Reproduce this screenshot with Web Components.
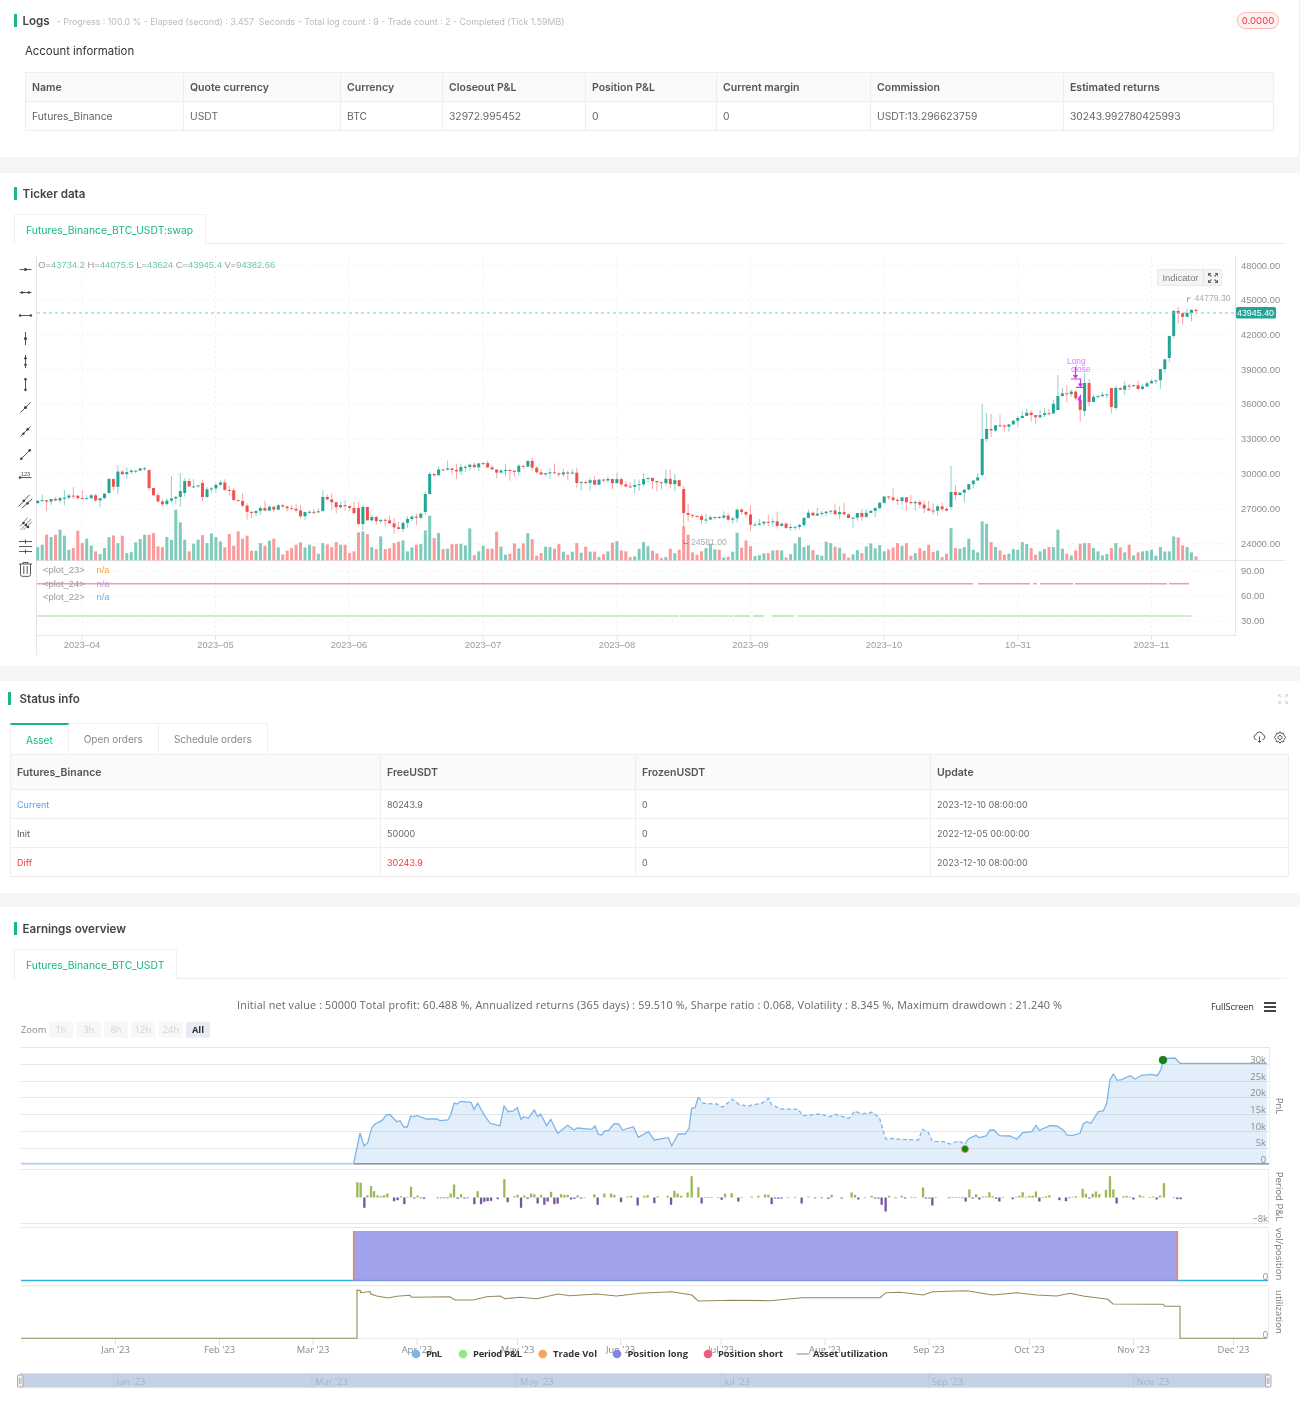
<!doctype html>
<html>
<head>
<meta charset="UTF-8" />
<title>Backtest result</title>
<style>
  body { margin: 0; background: #f4f5f7; font-family: Inter, "Liberation Sans", sans-serif; }
  app-panel { filter: blur(.35px); }
</style>
</head>
<body>

<template id="panel-tpl">
  <style>
    :host { display: block; background: #fff; color: #333; }
    header { display: flex; align-items: center; height: 13px; padding-top: var(--top, 14px); padding-left: var(--left, 13.5px); padding-right: 13px; }
    .bar { width: 3px; height: 13px; background: #1db58b; margin-right: var(--gap, 6px); flex: none; }
    h2 { margin: 2px 0 0; font-size: 11.6px; font-weight: 600; color: #444; white-space: nowrap; line-height: 13px; }
    .meta { flex: 1; min-width: 0; }
  </style>
  <header><span class="bar"></span><h2></h2><div class="meta"><slot name="meta"></slot></div><slot name="aside"></slot></header>
  <slot></slot>
</template>

<template id="table-tpl">
  <style>
    :host { display: block; }
    table { border-collapse: collapse; table-layout: fixed; width: 100%; font-size: var(--cell, 10.3px); color: #666; }
    th, td { border: 1px solid #eeeeee; padding: 0 6px; text-align: left; height: 28px; box-sizing: content-box; white-space: nowrap; overflow: hidden; }
    th { background: #fafafa; font-size: 10.5px; font-weight: 600; color: #555; }
    .blue { color: #5d9cec; }
    .red { color: #f5393f; }
    .dark { color: #555; }
  </style>
  <table><colgroup></colgroup><thead></thead><tbody></tbody></table>
</template>

<template id="tabs-tpl">
  <style>
    :host { display: flex; height: 30px; box-sizing: border-box; border-bottom: 1px solid #eee; font-size: 10.36px; }
    span { display: flex; align-items: center; box-sizing: border-box; height: 30px; padding: 0 11.5px; background: #fff; border: 1px solid #f0f0f0; border-bottom: 0; border-radius: 2px 2px 0 0; color: #18b787; }
  </style>
</template>

<template id="cards-tpl">
  <style>
    :host { display: flex; font-size: 10.05px; }
    span { display: flex; align-items: center; box-sizing: border-box; height: 31px; padding: 0 15px; border: 1px solid #f0f0f0; border-left: 0; border-bottom: 0; color: #888; }
    span.on { color: #18b787; border-top: 2px solid #1db58b; border-left: 1px solid #f0f0f0; }
  </style>
</template>

<app-panel heading="Logs" style="--top:14px;--gap:6px;margin-bottom:16px;box-shadow:inset -1px 0 #eee">
  <log-meta slot="meta" text="- Progress : 100.0 % - Elapsed (second) : 3.457  Seconds - Total log count : 9 - Trade count : 2 - Completed (Tick 1.59MB)"></log-meta>
  <pnl-badge slot="aside" value="0.0000"></pnl-badge>
  <account-block></account-block>
</app-panel>

<app-panel heading="Ticker data" style="margin-bottom:15px">
  <tab-strip style="margin:14px 15px 0 13.5px" tabs="Futures_Binance_BTC_USDT:swap"></tab-strip>
  <kline-chart></kline-chart>
</app-panel>

<app-panel heading="Status info" style="--top:11px;--left:7.5px;--gap:9px;margin-bottom:14px">
  <expand-icon slot="aside" style="--c:#dcdcdc;margin-right:-1px"></expand-icon>
  <status-block></status-block>
</app-panel>

<app-panel heading="Earnings overview" style="--top:15px;--left:13.5px">
  <tab-strip style="margin:14px 14.5px 0 13.5px" tabs="Futures_Binance_BTC_USDT"></tab-strip>
  <earnings-chart></earnings-chart>
</app-panel>

<script>
'use strict'

function shadow(el, tplId) {
  const root = el.attachShadow({ mode: 'open' });
  if (tplId) root.appendChild(document.getElementById(tplId).content.cloneNode(true));
  return root;
}
function esc(s) { return String(s).replace(/&/g, '&amp;').replace(/</g, '&lt;').replace(/>/g, '&gt;'); }
function txt(x, y, s, attrs) { return `<text x="${x}" y="${y}" ${attrs || ''}>${esc(s)}</text>`; }
function seeded(a) {
  return () => { a |= 0; a = a + 0x6D2B79F5 | 0; let t = Math.imul(a ^ a >>> 15, 1 | a); t = t + Math.imul(t ^ t >>> 7, 61 | t) ^ t; return ((t ^ t >>> 14) >>> 0) / 4294967296; };
}
function line(x1, y1, x2, y2, c, extra) { return `<line x1="${x1}" y1="${y1}" x2="${x2}" y2="${y2}" stroke="${c}" ${extra || ''}/>`; }
function pts(a) { return a.map(p => p[0] + ',' + p[1]).join(' '); }

customElements.define('app-panel', class extends HTMLElement {
  constructor() {
    super();
    const root = shadow(this, 'panel-tpl');
    root.querySelector('h2').textContent = this.getAttribute('heading');
  }
});

customElements.define('log-meta', class extends HTMLElement {
  constructor() {
    super();
    const root = this.attachShadow({ mode: 'open' });
    root.innerHTML = `<style>:host{display:block;white-space:pre;font-size:8.8px;color:#bbb;padding-left:7px;padding-top:1px;line-height:13px}</style>${esc(this.getAttribute('text'))}`;
  }
});

customElements.define('pnl-badge', class extends HTMLElement {
  constructor() {
    super();
    const root = this.attachShadow({ mode: 'open' });
    root.innerHTML = `<style>:host{display:flex;align-items:center;justify-content:center;width:42px;height:17px;box-sizing:border-box;margin-right:8px;background:#fff1f0;border:1px solid #ffb9b9;border-radius:8px;font-size:9.6px;color:#f5303c}</style>${esc(this.getAttribute('value'))}`;
  }
});

customElements.define('expand-icon', class extends HTMLElement {
  constructor() {
    super();
    const root = this.attachShadow({ mode: 'open' });
    root.innerHTML = `<style>:host{display:block;width:10px;height:10px;line-height:0}</style>
      <svg width="10" height="10" viewBox="0 0 10 10" fill="none" stroke="var(--c,#777)" stroke-width="1.1">
        <path d="M.5 .5L3.5 3.5M.5 3V.5H3M9.5 .5L6.5 3.5M7 .5H9.5V3M.5 9.5L3.5 6.5M.5 7V9.5H3M9.5 9.5L6.5 6.5M7 9.5H9.5V7"/></svg>`;
  }
});

customElements.define('data-table', class extends HTMLElement {
  constructor() {
    super();
    const root = shadow(this, 'table-tpl');
    const h = this.getAttribute('row-height');
    const hh = this.getAttribute('head-height');
    const style = document.createElement('style');
    style.textContent = `td{height:${h}px} th{height:${hh}px}`;
    root.appendChild(style);
    root.querySelector('colgroup').innerHTML = this.getAttribute('widths').split(',').map(w => `<col style="width:${w}px">`).join('');
    root.querySelector('thead').innerHTML = '<tr>' + this.getAttribute('head').split('|').map(c => `<th>${esc(c)}</th>`).join('') + '</tr>';
    root.querySelector('tbody').innerHTML = this.getAttribute('rows').split(';').map(r => '<tr>' + r.split('|').map(c => {
      const m = c.match(/^(blue|red|dark):(.*)$/);
      return m ? `<td class="${m[1]}">${esc(m[2])}</td>` : `<td>${esc(c)}</td>`;
    }).join('') + '</tr>').join('');
  }
});

customElements.define('tab-strip', class extends HTMLElement {
  constructor() {
    super();
    const root = shadow(this, 'tabs-tpl');
    this.getAttribute('tabs').split('|').forEach(t => {
      const s = document.createElement('span');
      s.textContent = t;
      root.appendChild(s);
    });
  }
});

customElements.define('card-tabs', class extends HTMLElement {
  constructor() {
    super();
    const root = shadow(this, 'cards-tpl');
    this.getAttribute('tabs').split('|').forEach((t, i) => {
      const s = document.createElement('span');
      s.textContent = t;
      if (i === 0) s.className = 'on';
      root.appendChild(s);
    });
  }
});

customElements.define('account-block', class extends HTMLElement {
  constructor() {
    super();
    const root = this.attachShadow({ mode: 'open' });
    root.innerHTML = `<style>
      :host{display:block;padding:17px 27px 26px 25px}
      h3{margin:0 0 14px;font-size:11.4px;line-height:14px;font-weight:400;color:#333}
    </style>
    <h3>Account information</h3>
    <data-table widths="158,157,102,143,131,154,193,210" head-height="28" row-height="28"
      head="Name|Quote currency|Currency|Closeout P&amp;L|Position P&amp;L|Current margin|Commission|Estimated returns"
      rows="Futures_Binance|USDT|BTC|32972.995452|0|0|USDT:13.296623759|30243.992780425993"></data-table>`;
  }
});

customElements.define('status-block', class extends HTMLElement {
  constructor() {
    super();
    const root = this.attachShadow({ mode: 'open' });
    root.innerHTML = `<style>
      :host{display:block;padding:18px 12px 16px 10px;--cell:9px}
      .top{display:flex;justify-content:space-between;align-items:center}
      .ic{display:flex;gap:8px;align-items:center;margin-right:2px;margin-top:-3px}
    </style>
    <div class="top">
      <card-tabs tabs="Asset|Open orders|Schedule orders"></card-tabs>
      <div class="ic">
        <svg width="13" height="12" viewBox="0 0 13 12" fill="none" stroke="#555" stroke-width="1"><path d="M3.5 8.5H3A2.5 2.5 0 0 1 3 3.6 3.6 3.6 0 0 1 10 3.8 2.4 2.4 0 0 1 10 8.5H9.500"/><path d="M6.500 5.500V11.500M4.800 9.800L6.500 11.500 8.200 9.800"/></svg>
        <svg width="12" height="13" viewBox="0 0 12 13" fill="none" stroke="#555" stroke-width="1"><path d="M6 .7L7.200 2.500 9.300 2.100 10 4.200 11.500 6.500 10 8.800 9.300 10.900 7.200 10.500 6 12.300 4.800 10.500 2.700 10.900 2 8.800 .5 6.500 2 4.200 2.700 2.100 4.800 2.500Z"/><circle cx="6" cy="6.500" r="2"/></svg>
      </div>
    </div>
    <data-table widths="370,255,295,358" head-height="34" row-height="28"
      head="Futures_Binance|FreeUSDT|FrozenUSDT|Update"
      rows="blue:Current|80243.9|0|2023-12-10 08:00:00;dark:Init|50000|0|2022-12-05 00:00:00;red:Diff|red:30243.9|0|2023-12-10 08:00:00"></data-table>`;
  }
});

// one drawing tool per row, centre of each icon is 11.5,11.5
const TOOL_ICONS = (() => {
  const dot = (x, y) => `<circle cx="${x}" cy="${y}" r="1.3" fill="#444" stroke="none"/>`;
  const seg = (x1, y1, x2, y2) => `<path d="M${x1} ${y1}L${x2} ${y2}"/>`;
  const rows = [];
  [[-.1, .1], [-3.3, 3.3], [-5.3, 5.3]].forEach(d => rows.push(seg(5.500, 11.500, 17.500, 11.500) + d.map(v => dot(11.500 + v, 11.500)).join('')));
  [[-.1, .1], [-3.3, 3.3], [-5.3, 5.3]].forEach(d => rows.push(seg(11.500, 5, 11.500, 18) + d.map(v => dot(11.500, 11.500 + v)).join('')));
  [[-.1, .1], [-2.2, 2.2], [-4.2, 4.2]].forEach(d => rows.push(seg(6.500, 16.500, 16.500, 6.500) + d.map(v => dot(11.500 + v, 11.500 - v)).join('')));
  rows.push(`<text x="7" y="9.500" font-size="5.500" fill="#444" stroke="none" font-family="Liberation Sans">123</text>` + seg(5.500, 11.500, 17.500, 11.500) + dot(6, 11.500));
  rows.push(seg(4.500, 17.500, 15.500, 5.800) + seg(8.200, 18.800, 18.200, 9.800) + dot(9.800, 11.800) + dot(13.500, 14.300));
  rows.push(`<g stroke="#777">` + seg(6, 14.500, 13.500, 5.500) + seg(6.500, 18, 17, 7) + seg(9.500, 18, 18, 9.500) + `</g>` + dot(9.500, 11) + dot(12, 13) + dot(14, 15));
  rows.push(seg(5, 6.500, 18, 6.500) + seg(5, 11.500, 18, 11.500) + seg(5, 16.500, 18, 16.500) + seg(11.500, 4.500, 11.500, 8.500) + seg(11.500, 14.500, 11.500, 18.500));
  rows.push(`<path d="M5 6H18M9 6V4.500H14V6M6.500 6V16.500A1.800 1.800 0 0 0 8.300 18.300H14.700A1.800 1.800 0 0 0 16.500 16.500V6M9.800 8V16M13.200 8V16"/>`);
  return rows;
})();

customElements.define('tool-rail', class extends HTMLElement {
  constructor() {
    super();
    const root = this.attachShadow({ mode: 'open' });
    root.innerHTML = `<style>:host{display:flex;flex-direction:column;width:23px}svg{display:block;flex:none}</style>` +
      TOOL_ICONS.map(i => `<svg width="23" height="23.08" viewBox="0 0 23 23" fill="none" stroke="#444" stroke-width=".9">${i}</svg>`).join('');
  }
});

customElements.define('indicator-button', class extends HTMLElement {
  constructor() {
    super();
    const root = this.attachShadow({ mode: 'open' });
    root.innerHTML = `<style>
      :host{display:flex;align-items:stretch;box-sizing:border-box;width:65px;height:17px;background:#f3f4f6;border:1px solid #e8e8e8;border-radius:2px;font:9.4px "Liberation Sans",sans-serif;color:#7b7b7b}
      span{flex:1;display:flex;align-items:center;justify-content:center;border-right:1px solid #e3e3e3}
      div{width:17px;display:flex;align-items:center;justify-content:center}
    </style><span>Indicator</span><div><expand-icon style="--c:#666"></expand-icon></div>`;
  }
});

// pixel positions read off the picture, x then y of the candle close
const CLOSE_PATH = [[38,503],[55,498],[72,493],[82,498],[100,498],[108,487],[113,488],[117,474],[132,470],[145,468],[148,483],[157,502],[170,502],[183,487],[200,483],[205,493],[220,483],[233,497],[250,512],[267,508],[287,508],[303,515],[320,512],[323,500],[337,505],[347,508],[360,517],[380,520],[400,527],[407,517],[421,515],[425,503],[429,483],[438,472],[443,467],[460,470],[482,463],[497,473],[513,472],[528,463],[533,470],[553,475],[573,475],[577,482],[600,482],[617,481],[633,486],[643,480],[673,482],[679,484],[683,513],[688,517],[707,520],[713,517],[733,518],[737,510],[745,513],[750,522],[773,523],[795,527],[803,520],[808,515],[827,512],[853,517],[868,513],[885,497],[907,500],[928,508],[947,508],[951,498],[963,492],[968,483],[978,475],[982,439],[987,433],[997,425],[1013,423],[1027,415],[1047,415],[1057,398],[1063,392],[1075,395],[1080,407],[1084,393],[1088,393],[1093,399],[1102,393],[1111,398],[1116,397],[1125,387],[1142,388],[1156,380],[1161,370],[1165,358],[1169,336],[1173,311],[1178,313],[1183,317],[1187,315],[1192,312],[1196,313]];
// tops of the volume bars in the zoomed crops
const VOL_A = [892,885,855,862,855,840,858,900,895,843,880,867,888,905,913,895,862,857,880,858,910,907,878,868,855,855,850,890,892,862,870,780,818,870,905,882,870,856,880,851,862,875,893,853,888,845,867,858,903,903,880,888,873,867,893,914,903,895,885,878,893,885,890,912,880,884,892,877,885,885,910,905,848,845,853,892,898,860,898,896,880,876,872,905,893,885];
const VOL_B = [433,392,348,415,400,448,447,433,433,432,437,386,466,455,438,447,447,396,441,465,462,431,446,431,400,418,468,460,441,442,447,433,456,465,456,430,459,441,456,456,472,463,455,429,424,452,455,472,470,447,427,439,453,461,475,472,447,460,450,380,405,458,465,455,445,432,449,450,473,471,456,399,444,422,439,469,466,461,460,452,451,452,473,463,431,412,442,437,451,465,468,426,430,441,444,461,474,464,451,460,440,431];
const VOL_C = [888,880,918,910,895,903,885,907,903,922,912,835,895,897,892,867,900,908,815,822,877,892,902,915,912,898,900,877,883,895,915,905,898,892,892,840,897,912,917,902,882,880,880,895,905,917,913,895,880,893,908,885,917,908,905,903,900,918,892,905,905,860,863,887,892,908,920];
// wick top and bottom where the spread stands out
const WICK_OVERRIDE = { 32: [473, 507], 205: [466, 510], 212: [404, 476], 213: [413, 442], 214: [414, 437], 229: [375, 410], 234: [397, 422], 145: [486, 527], 30: [476, 503] };
// body top, bottom and direction of the tall candles
const BODY_OVERRIDE = { 16: [479, 493, 1], 25: [470, 488, 0], 33: [481, 493, 1], 37: [483, 497, 0], 64: [497, 511, 1], 72: [508, 524, 0], 73: [507, 524, 1], 87: [494, 512, 1], 88: [474, 494, 1], 145: [489, 513, 0], 205: [492, 507, 1], 212: [439, 475, 1], 213: [429, 439, 1], 229: [396, 410, 1], 234: [400, 410, 0], 235: [383, 411, 1], 236: [383, 402, 0], 241: [388, 407, 0], 242: [388, 408, 1], 254: [336, 358, 1], 255: [311, 336, 1] };

customElements.define('kline-chart', class extends HTMLElement {
  constructor() {
    super();
    const root = this.attachShadow({ mode: 'open' });
    const rnd = seeded(23);
    const closeAt = x => {
      for (let i = 1; i < CLOSE_PATH.length; i++) {
        const a = CLOSE_PATH[i - 1], b = CLOSE_PATH[i];
        if (x <= b[0]) return a[1] + (b[1] - a[1]) * (x - a[0]) / (b[0] - a[0]);
      }
      return 313;
    };
    const GREEN = '#22a594', RED = '#f0504f';
    let s = '';
    // grid
    const priceY = [265.3, 300, 334.7, 369.3, 404, 439, 474, 509, 543.7];
    const prices = ['48000.00', '45000.00', '42000.00', '39000.00', '36000.00', '33000.00', '30000.00', '27000.00', '24000.00'];
    const lowY = [571, 596, 621], lows = ['90.00', '60.00', '30.00'];
    const months = [[82, '2023–04'], [215.5, '2023–05'], [349, '2023–06'], [483, '2023–07'], [617, '2023–08'], [750.5, '2023–09'], [884, '2023–10'], [1018, '10–31'], [1151.500, '2023–11']];
    const dots = 'stroke-width="1" stroke-dasharray="2 3"';
    priceY.concat(lowY).forEach(y => { s += line(37, y, 1235, y, '#f0f0f0', dots); });
    months.forEach(m => { s += line(m[0], 256, m[0], 636, '#f0f0f0', dots); });
    // axes
    s += line(36.5, 256, 36.5, 655, '#e6e6e6');
    s += line(1235.5, 256, 1235.5, 636, '#e6e6e6');
    s += line(37, 635.5, 1235, 635.5, '#e6e6e6');
    s += line(37, 560.5, 1285, 560.5, '#e6e6e6');
    months.forEach(m => { s += line(m[0], 636, m[0], 640, '#e6e6e6'); });
    // candles and volume
    let prev = 503, body = '', vols = '';
    const volH = [];
    VOL_A.forEach((v, i) => { volH[i] = (932 - v) / 3; });
    VOL_B.forEach((v, i) => { volH[86 + i] = (482 - v) / 3; });
    VOL_C.forEach((v, i) => { volH[194 + i] = (932 - v) / 3; });
    for (let i = 0; i < 261; i++) {
      const x = 37.7 + i * 4.455;
      let c = closeAt(x) + (rnd() - .5) * 5.5;
      let top = Math.min(prev, c), bot = Math.max(prev, c);
      if (bot - top < 1) bot = top + 1;
      let up = c < prev;
      const b = BODY_OVERRIDE[i];
      if (b) { top = b[0]; bot = b[1]; up = !!b[2]; c = up ? top : bot; }
      const col = up ? GREEN : RED;
      let hi = top - rnd() * rnd() * 11, lo = bot + rnd() * rnd() * 11;
      if (WICK_OVERRIDE[i]) { hi = WICK_OVERRIDE[i][0]; lo = WICK_OVERRIDE[i][1]; }
      body += line(x.toFixed(1), hi.toFixed(1), x.toFixed(1), lo.toFixed(1), col, 'stroke-width="1" opacity=".5"');
      body += `<rect x="${(x - 1.5).toFixed(1)}" y="${top.toFixed(1)}" width="3" height="${(bot - top).toFixed(1)}" fill="${col}"/>`;
      const h = volH[i] === undefined ? 6 + rnd() * 12 : volH[i];
      vols += `<rect x="${(x - 1.5).toFixed(1)}" y="${(560.400 - h).toFixed(1)}" width="3" height="${h.toFixed(1)}" fill="${up ? '#7ecbbb' : '#fb9a9a'}"/>`;
      prev = c;
    }
    s += vols + body;
    // last price line
    s += line(37, 313, 1236, 313, '#6fd3c6', 'stroke-width="1.200" stroke-dasharray="3 3"');
    // indicator lines
    const redSegs = [[37, 973], [978, 1030], [1033, 1037], [1040, 1073], [1075, 1167], [1169, 1189]];
    redSegs.forEach(g => { s += line(g[0], 583.7, g[1], 583.7, '#f89a9a', 'stroke-width="1.500"'); });
    const greenSegs = [[37, 679], [680, 733], [734, 750], [753, 764], [772, 794], [797, 1191.500]];
    greenSegs.forEach(g => { s += line(g[0], 616, g[1], 616, '#9ddb97', 'stroke-width="1.200"'); });
    // axis labels
    const axis = 'font-size="9.4" fill="#8d8d8d"';
    prices.forEach((p, i) => { s += txt(1241, priceY[i] + 3.300, p, axis); });
    lows.forEach((p, i) => { s += txt(1241, lowY[i] + 3.300, p, axis); });
    months.forEach(m => { s += txt(m[0], 648, m[1], 'text-anchor="middle" font-size="9.4" fill="#9a9aa2"'); });
    // legend text
    const lg = 'font-size="9.4" fill="#9a9aa2"';
    s += txt(43, 573.3, '<plot_23>', lg) + txt(96.5, 573.3, 'n/a', 'font-size="9.4" fill="#f7a93f"');
    s += txt(43, 586.8, '<plot_24>', lg) + txt(96.5, 586.8, 'n/a', 'font-size="9.4" fill="#c39be0"');
    s += txt(43, 600.3, '<plot_22>', lg) + txt(96.5, 600.3, 'n/a', 'font-size="9.4" fill="#6cb2ee"');
    // OHLC head
    const tGrey = 'fill="#9a9a9a"', tVal = 'fill="#6ec5b4"';
    s += `<text x="38.300" y="267.800" font-size="9.4">` +
      `<tspan ${tGrey}>O=</tspan><tspan ${tVal}>43734.2</tspan><tspan ${tGrey}> H=</tspan><tspan ${tVal}>44075.5</tspan>` +
      `<tspan ${tGrey}> L=</tspan><tspan ${tVal}>43624</tspan><tspan ${tGrey}> C=</tspan><tspan ${tVal}>43945.4</tspan>` +
      `<tspan ${tGrey}> V=</tspan><tspan ${tVal}>94382.66</tspan></text>`;
    // price tag and extremes
    s += `<rect x="1236" y="307" width="40" height="11.500" rx="1.500" fill="#22a594"/>`;
    s += txt(1237, 316, '43945.40', 'font-size="8.900" fill="#fff"');
    s += txt(1194.600, 301, '44779.30', 'font-size="8.600" fill="#a9adb5"');
    s += `<path d="M1190.500 298H1187.500V302" fill="none" stroke="#8d8d8d" stroke-width=".9"/>`;
    s += txt(691, 545, '24581.00', 'font-size="8.600" fill="#a9adb5"');
    s += `<path d="M683.500 540V543.500H688" fill="none" stroke="#8d8d8d" stroke-width=".9"/>`;
    // trade marks
    const P = '#c43cf2';
    s += txt(1067, 363.500, 'Long', 'font-size="8.400" fill="#dc78ff"') + txt(1071, 372, 'close', 'font-size="8.400" fill="#dc78ff"');
    s += `<g fill="none" stroke="${P}" stroke-width="1.200">` +
      `<path d="M1075.500 367V376M1071 379H1080.500V385M1076 387.300H1084"/></g>` +
      `<path d="M1072.800 375H1078.200L1075.500 379ZM1077.800 383.500H1083.200L1080.500 387.500ZM1077.500 399L1081 394V404Z" fill="${P}"/>`;
    root.innerHTML = `<style>
      :host{display:block;position:relative;height:422px}
      svg{display:block;font-family:"Liberation Sans",sans-serif}
      tool-rail{position:absolute;left:14px;top:14px}
      indicator-button{position:absolute;left:1157px;top:25px}
    </style>
    <svg width="1300" height="422" viewBox="0 244 1300 422" shape-rendering="geometricPrecision">${s}</svg>
    <tool-rail></tool-rail>
    <indicator-button></indicator-button>`;
  }
});

// PnL curve, read off the picture. The dashed stretch runs from x=698 to x=965
const PNL = [[353.7,1163.3],[360,1133],[364,1146],[367.7,1142.7],[371.7,1128],[375,1124],[381.7,1120.7],[386.7,1114.7],[390,1114.7],[396.7,1121.7],[400,1120.7],[404,1127],[407.3,1127],[410.7,1116],[413,1116.7],[417.3,1115.7],[426.7,1119],[436.7,1119],[440,1120.7],[447.7,1120],[450.7,1115],[454,1103.3],[456.7,1104],[461,1101.3],[471,1102.3],[474,1109.3],[477.7,1103.3],[483.3,1113.3],[490,1123.3],[500,1126],[504,1106],[508.3,1111.7],[513.3,1111],[517.3,1107.7],[521,1119.3],[524,1116.7],[528.3,1118.3],[534.3,1110],[537.7,1116.7],[540.7,1114],[546.7,1125.7],[550.7,1119.3],[557.7,1133.3],[567.7,1125.3],[574,1130],[577.3,1128],[591.7,1129.3],[595,1126],[598.3,1134.3],[601.7,1135],[605,1130.7],[608.3,1130.7],[614,1124],[618.3,1123.7],[622.7,1130],[633.3,1126.7],[638.3,1137.3],[648.3,1131.7],[654.3,1140],[668.3,1137.7],[671.7,1145.7],[678.3,1134],[685,1134],[689,1128.3],[691.7,1108.3],[695,1107.7],[698.3,1097.3]];
const PNL_DASH = [[698.3,1097.3],[703.3,1103.3],[716.7,1104],[722.3,1107.3],[732.3,1099.3],[740,1105],[748.3,1106],[761.7,1103.3],[768.7,1098.3],[771.7,1105],[781.7,1109],[798.3,1109.3],[802.7,1115.7],[820,1114],[830,1116.7],[835,1114.3],[849,1118.3],[855,1111],[861.700,1114],[871.700,1112.3],[879.300,1117.3],[885.700,1139],[891.700,1138.3],[900,1139.3],[918.300,1140],[922.700,1129.3],[928.300,1132.3],[932.300,1141.3],[943.300,1141.700],[950,1144],[958.300,1141],[965,1144]];
const PNL_END = [[965,1144],[968.3,1139],[976,1135.3],[979.3,1137.7],[986,1136],[990,1130],[994,1130],[999.3,1135.7],[1010,1136],[1016.7,1139.3],[1022.7,1132.7],[1031.7,1131.7],[1036,1125.3],[1039.3,1130.3],[1050,1125.7],[1056.7,1126],[1063.3,1130],[1066.7,1135],[1071.7,1135.7],[1080,1133.3],[1083.3,1124],[1086.7,1121.7],[1091,1123.3],[1098.3,1111.7],[1103.3,1111],[1106.7,1103.3],[1110,1080],[1113.3,1074],[1117.3,1080.3],[1121.7,1079.7],[1130,1075.7],[1135,1079],[1141.7,1075.3],[1151.7,1074.3],[1157.3,1075.7],[1160.7,1070],[1163.3,1060],[1168,1058.5],[1175,1058],[1180,1063.3],[1266.7,1063.3]];
// period P&L bars per crop: origin x, [x, height] in 3x pixels, up is positive
const BARS = [[0, [[1072,46],[1082,44],[1093,-31],[1102,7],[1113,34],[1122,19],[1133,7],[1143,4],[1152,7],[1162,12],[1182,-11],[1193,-8],[1203,4],[1213,-20],[1222,2],[1233,32],[1243,-3],[1253,6],[1263,-2],[1272,-4],[1313,-2],[1323,-2],[1333,-2],[1343,-2],[1352,12],[1362,39],[1373,-4],[1383,10],[1393,-3],[1403,-2],[1423,-20],[1433,19],[1443,-20],[1453,-13],[1463,-11],[1473,-10],[1493,-5]]],
  [500, [[13,55],[23,-14],[43,4],[53,8],[63,-31],[73,6],[83,-4],[93,12],[103,10],[113,-18],[123,8],[133,-22],[143,-12],[153,17],[163,-20],[173,-18],[183,10],[193,8],[203,8],[213,-6],[223,-4],[233,7],[243,-3],[253,1],[283,10],[293,-22],[313,12],[333,12],[343,8],[363,-14],[383,3],[393,5],[413,-24],[433,5],[443,7],[463,-17],[473,4],[503,5],[513,-22],[523,20],[533,12],[543,5],[563,15],[575,64],[595,31],[605,-18],[615,2],[625,1],[635,1],[655,1],[665,-7],[675,12],[695,13],[715,-12],[725,1],[755,3],[775,5],[795,9],[805,8],[815,-20],[825,-3],[835,-4],[845,-3],[865,1],[885,1],[905,-18],[925,3],[945,-2],[965,-2],[985,-4],[995,8],[1025,-3],[1055,15],[1065,8],[1075,-6],[1095,1],[1115,5],[1125,-3],[1135,-3],[1145,-22],[1157,-42],[1167,5],[1187,-2]]],
  [900, [[5,5],[15,-3],[35,2],[45,1],[69,30],[78,-3],[88,-3],[97,-24],[107,1],[147,-2],[157,2],[167,1],[177,1],[187,-1],[197,-12],[208,24],[218,-3],[228,10],[238,-6],[248,3],[258,3],[268,16],[278,4],[288,-4],[298,-12],[308,1],[338,-5],[348,2],[358,5],[368,16],[378,2],[388,5],[398,5],[408,18],[418,-12],[428,1],[438,4],[448,7],[478,-8],[498,-11],[508,-2],[518,2],[528,4],[548,26],[558,11],[568,-3],[578,11],[588,18],[598,10],[618,23],[630,64],[640,24],[650,-18],[670,4],[680,5],[690,1],[700,-6],[720,7],[730,3],[750,1],[760,3],[770,-6],[780,6],[792,43],[822,1],[832,-5],[842,-5]]]];
const UTIL = [[21,1338.3],[357,1338.3],[357,1290],[360.700,1290.700],[360.700,1292.700],[370,1291.500],[370.700,1294],[376.700,1296],[388.300,1298],[396.700,1296.300],[410,1295.300],[411.700,1297.300],[450,1296.700],[455,1300],[473.300,1300],[486.700,1296.700],[500,1296],[505,1298.700],[520,1297.300],[536.700,1298.700],[558,1294],[570,1295.700],[596.700,1294],[616.700,1296],[640,1293.300],[671.700,1291.700],[691.700,1295],[698.300,1301],[733,1300.300],[770,1300.700],[801.700,1297.700],[880,1297.700],[886,1292.700],[900,1292.300],[923.300,1295],[933,1291.700],[966.700,1290.700],[993,1295],[1016.700,1292.700],[1036.700,1295],[1056.700,1296],[1070,1293.300],[1083,1296],[1108,1299.300],[1113,1304],[1163,1304.300],[1165,1306.300],[1180,1306.300],[1180,1338.300],[1266.700,1338.300]];

customElements.define('earnings-chart', class extends HTMLElement {
  constructor() {
    super();
    const root = this.attachShadow({ mode: 'open' });
    let s = '';
    const lbl = 'fill="#8a8a8a" font-size="9.4"';
    s += txt(649.5, 1009, 'Initial net value : 50000 Total profit: 60.488 %, Annualized returns (365 days) : 59.510 %, Sharpe ratio : 0.068, Volatility : 8.345 %, Maximum drawdown : 21.240 %', 'text-anchor="middle" font-size="10.8" fill="#666" textLength="825" lengthAdjust="spacing"');
    s += txt(1211, 1009.5, 'FullScreen', 'font-size="9.2" fill="#333" textLength="43" lengthAdjust="spacing"');
    s += `<path d="M1264 1003H1276M1264 1007H1276M1264 1011H1276" stroke="#444" stroke-width="1.800"/>`;
    // range selector
    s += txt(21, 1033, 'Zoom', lbl);
    [[49, '1h'], [76.7, '3h'], [104, '8h'], [131, '12h'], [159, '24h']].forEach(b => {
      s += `<rect x="${b[0]}" y="1021.700" width="24" height="16" rx="1.500" fill="#f7f7f7"/>` + txt(b[0] + 12, 1033, b[1], 'text-anchor="middle" font-size="9.4" fill="#d4d4d4"');
    });
    s += `<rect x="186" y="1021.700" width="24" height="16" rx="1.500" fill="#e6ebf5"/>` + txt(198, 1033, 'All', 'text-anchor="middle" font-size="9.4" font-weight="700" fill="#333"');
    // pnl grid
    const grid = '#e6e6e6';
    [1047.5, 1064.5, 1081.5, 1097.5, 1114.5, 1131.5, 1148.5].forEach(y => { s += line(21, y, 1269, y, grid); });
    s += line(1269.5, 1047, 1269.5, 1164, '#e9edf4');
    // area
    const all = PNL.concat(PNL_DASH.slice(1), PNL_END.slice(1));
    s += `<path d="M${pts(all).replace(/ /g, 'L')}L1266.700 1163.500L353.700 1163.500Z" fill="#7cb5ec" fill-opacity=".22"/>`;
    s += line(21, 1163.7, 353.700, 1163.7, '#b4cfee', 'stroke-width="1.800"');
    s += line(353.700, 1163.8, 1269, 1163.8, '#6f7a86', 'stroke-width="1.300"');
    s += `<polyline points="${pts(PNL)}" fill="none" stroke="#7cb5ec" stroke-width="1.300"/>`;
    s += `<polyline points="${pts(PNL_DASH)}" fill="none" stroke="#7cb5ec" stroke-width="1.300" stroke-dasharray="4 2.500"/>`;
    s += `<polyline points="${pts(PNL_END)}" fill="none" stroke="#7cb5ec" stroke-width="1.300"/>`;
    s += `<circle cx="965" cy="1149" r="3.500" fill="#0b8a10" stroke="#f08a5a" stroke-width=".8"/>`;
    s += `<circle cx="1163" cy="1060" r="3.800" fill="#0b8a10" stroke="#2d5d33" stroke-width=".8"/>`;
    const yl = 'text-anchor="end" fill="#8a8a8a" font-size="9.4"';
    [['30k', 1063.200], ['25k', 1080.200], ['20k', 1096.200], ['15k', 1113.200], ['10k', 1129.700], ['5k', 1146.200], ['0', 1163]].forEach(l => { s += txt(1266, l[1], l[0], yl); });
    // period p&l
    s += line(21, 1169.5, 1269, 1169.5, grid) + line(21, 1223.5, 1269, 1223.5, grid) + line(1268.5, 1169, 1268.5, 1224, '#e9edf4');
    BARS.forEach(b => b[1].forEach(p => {
      const x = b[0] + p[0] / 3, h = Math.abs(p[1]) / 3;
      s += `<rect x="${(x - 1.15).toFixed(1)}" y="${(p[1] > 0 ? 1197.500 - h : 1197.500).toFixed(1)}" width="2.300" height="${Math.max(h, .7).toFixed(1)}" fill="${p[1] > 0 ? '#9ab955' : '#76569c'}"/>`;
    }));
    s += txt(1268, 1221.500, '−8k', yl);
    // position
    s += line(21, 1227.5, 1269, 1227.5, grid) + line(1268.5, 1227, 1268.5, 1281, '#e9edf4');
    s += `<rect x="353.500" y="1231" width="823.500" height="49.500" fill="#a0a3eb"/>`;
    s += line(353.500, 1280.5, 1177, 1280.5, '#7b93e8', 'stroke-width="1.500"');
    s += line(21, 1280.5, 353.500, 1280.5, '#2fb0e4', 'stroke-width="1.600"') + line(1177, 1280.5, 1268, 1280.5, '#2fb0e4', 'stroke-width="1.600"');
    s += line(353.700, 1231, 353.700, 1280.500, '#f0855f', 'stroke-width="1.600"') + line(1177.300, 1231, 1177.300, 1280.500, '#f0855f', 'stroke-width="1.600"');
    s += txt(1268, 1279.500, '0', yl);
    // utilization
    s += line(21, 1285.5, 1269, 1285.5, grid) + line(1268.5, 1285, 1268.5, 1339, '#e9edf4') + line(21, 1338.7, 1269, 1338.7, '#e9edf4');
    s += `<polyline points="${pts(UTIL)}" fill="none" stroke="#96885a" stroke-width="1.100"/>`;
    s += txt(1268, 1337.500, '0', yl);
    // axis titles, cut to the pane height like in the original
    const rot = (x, y, t) => `<text transform="translate(${x} ${y}) rotate(90)" text-anchor="middle" font-size="9.6" fill="#777">${esc(t)}</text>`;
    s += rot(1275.5, 1106, 'PnL') + rot(1275.5, 1196.500, 'Period P&L') + rot(1275.5, 1254, 'vol/position') + rot(1275.5, 1312, 'utilization');
    // x axis
    [[115.5, "Jan '23"], [219.5, "Feb '23"], [313, "Mar '23"], [417, "Apr '23"], [517.5, "May '23"], [620.5, "Jun '23"], [721, "Jul '23"], [825, "Aug '23"], [929, "Sep '23"], [1029.5, "Oct '23"], [1133.5, "Nov '23"], [1233.5, "Dec '23"]].forEach(m => {
      s += line(m[0], 1339, m[0], 1345, '#dde3ee');
      s += txt(m[0], 1352.800, m[1], 'text-anchor="middle" fill="#8a8a8a" font-size="9.4"');
    });
    // legend
    const bold = w => `font-size="9.4" font-weight="700" fill="#333" textLength="${w}" lengthAdjust="spacing"`;
    [[416, '#7cb5ec', 426, 'PnL', 16], [463, '#90ed7d', 473, 'Period P&L', 49], [542.7, '#f7a35c', 553, 'Trade Vol', 44], [617, '#8085e9', 627.5, 'Position long', 60.5], [708, '#f15c80', 718, 'Position short', 65]].forEach(l => {
      s += `<circle cx="${l[0]}" cy="1354" r="4.300" fill="${l[1]}"/>` + txt(l[2], 1357.300, l[3], bold(l[4]));
    });
    s += line(796.700, 1354, 809.300, 1354, '#a19468', 'stroke-width="1.100"') + txt(813, 1357.300, 'Asset utilization', bold(75));
    // navigator
    s += `<rect x="20" y="1373.300" width="1249" height="14.400" fill="#c5d2e3"/>`;
    s += line(20, 1387.700, 1269, 1387.700, '#dfe5ee');
    [[113.7, 116.7, "Jan '23"], [312, 315, "Mar '23"], [516.5, 520, "May '23"], [721, 724, "Jul '23"], [929, 931.7, "Sep '23"], [1133.5, 1136.7, "Nov '23"]].forEach(m => {
      s += line(m[0], 1373.300, m[0], 1387.700, '#bcc9db');
      s += txt(m[1], 1384.500, m[2], 'fill="#a8b4c6" font-size="9.4"');
    });
    [17.500, 1265.5].forEach(x => {
      s += `<rect x="${x}" y="1375" width="5.500" height="12" rx="1" fill="#f2f2f2" stroke="#999" stroke-width=".8"/>` + line(x + 2, 1378, x + 2, 1384, '#999', 'stroke-width=".7"') + line(x + 3.500, 1378, x + 3.500, 1384, '#999', 'stroke-width=".7"');
    });
    root.innerHTML = `<style>
      :host{display:block;height:431px}
      svg{display:block;font-family:"Open Sans",sans-serif}
    </style>
    <svg width="1300" height="431" viewBox="0 979 1300 431">${s}</svg>`;
  }
});
</script>
</body>
</html>
